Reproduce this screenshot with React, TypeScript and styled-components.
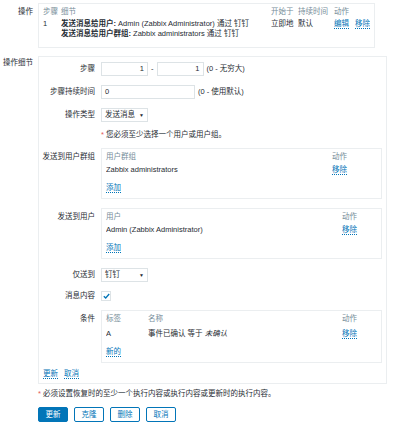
import styled, { createGlobalStyle } from "styled-components";

const GlobalStyle = createGlobalStyle`
  body {
    margin: 0;
    background: #ffffff;
    font-family: "Liberation Sans", Arial, "Noto Sans CJK SC", sans-serif;
    font-size: 7.5px;
    line-height: 10px;
    color: #1f2c33;
  }
`;

/* =======================
   STYLES
======================= */
const Page = styled.div`
  padding: 3px 0 0;
  width: 393px;
`;

const FormRow = styled.div<{ gap?: number }>`
  display: grid;
  grid-template-columns: 33px 1fr;
  column-gap: 5px;
  margin-bottom: ${({ gap }) => gap ?? 0}px;
`;

const RowLabel = styled.div<{ top?: number }>`
  text-align: right;
  padding-top: ${({ top }) => top ?? 0}px;
  white-space: nowrap;
`;

const Box = styled.div<{ right?: number }>`
  border: 1px solid #ebeef0;
  margin-right: ${({ right }) => right ?? 0}px;
`;

const TopBox = styled(Box)`
  padding: 3px 4px 8px;
`;

const Table = styled.table<{ headGap?: number }>`
  width: 100%;
  border-collapse: collapse;
  table-layout: fixed;

  th {
    font-weight: normal;
    color: #768d99;
    text-align: left;
    padding: 0 0 ${({ headGap }) => headGap ?? 2}px;
    height: 10px;
  }

  td {
    padding: 0;
    vertical-align: top;
    white-space: nowrap;
    overflow: hidden;
  }
`;

const Strong = styled.b`
  font-weight: bold;
`;

const Link = styled.a`
  color: #0275b8;
  text-decoration: none;
  border-bottom: 1px dotted #0275b8;
  cursor: pointer;
  & + & {
    margin-left: 6px;
  }
`;

const DetailBox = styled(Box)`
  padding: 5px 4px 4px 0;
`;

const DetailGrid = styled.div`
  display: grid;
  grid-template-columns: 56px 1fr;
  column-gap: 6px;
  row-gap: 9px;
  align-items: start;
`;

const FieldLabel = styled.div<{ top?: number; h?: number }>`
  text-align: right;
  line-height: ${({ h }) => h ?? 14}px;
  padding-top: ${({ top }) => top ?? 0}px;
  white-space: nowrap;
`;

const Field = styled.div<{ h?: number }>`
  display: flex;
  align-items: center;
  gap: 3px;
  min-height: ${({ h }) => h ?? 14}px;
  white-space: nowrap;
`;

const Input = styled.div<{ w: number; align?: string }>`
  box-sizing: border-box;
  width: ${({ w }) => w}px;
  height: 14px;
  line-height: 12px;
  border: 1px solid #dde3e6;
  padding: 0 3px;
  text-align: ${({ align }) => align ?? "left"};
`;

const Select = styled.div`
  box-sizing: border-box;
  width: 47px;
  height: 14px;
  line-height: 12px;
  border: 1px solid #dde3e6;
  padding: 0 3px;
  display: flex;
  justify-content: space-between;
  align-items: center;
`;

const Caret = styled.span`
  font-size: 5px;
  color: #1f2c33;
`;

const Full = styled.div`
  grid-column: 2;
  line-height: 10px;
  margin: -1px 0;
`;

const Req = styled.span`
  color: #e45959;
  margin-right: 2px;
`;

const InnerBox = styled(Box)`
  padding: 3px 4px 5px;
`;

const AddLine = styled.div`
  margin-top: 8px;
`;

const Checkbox = styled.div`
  box-sizing: border-box;
  width: 10px;
  height: 10px;
  border: 1px solid #dde3e6;
  display: flex;
  align-items: center;
  justify-content: center;
`;

const Italic = styled.i`
  font-style: italic;
`;

const FormLinks = styled.div`
  padding: 6px 0 0 4px;
`;

const Note = styled.div`
  margin: 5px 0 8px 38px;
`;

const Buttons = styled.div`
  display: flex;
  gap: 6px;
  padding-left: 38px;
`;

const Button = styled.button<{ primary?: boolean }>`
  box-sizing: border-box;
  width: 30px;
  height: 15px;
  padding: 0;
  font-family: inherit;
  font-size: 7.5px;
  line-height: 13px;
  border: 1px solid #0275b8;
  border-radius: 2px;
  background: ${({ primary }) => (primary ? "#0275b8" : "#ffffff")};
  color: ${({ primary }) => (primary ? "#ffffff" : "#0275b8")};
`;

/* =======================
   COMPONENT
======================= */
const App = () => {
  const ops = [
    { who: "发送消息给用户:", to: "Admin (Zabbix Administrator) 通过 钉钉" },
    { who: "发送消息给用户群组:", to: "Zabbix administrators 通过 钉钉" },
  ];

  return (
    <Page>
      <GlobalStyle />
      <FormRow gap={8}>
        <RowLabel top={4}>操作</RowLabel>
        <TopBox right={18}>
          <Table>
            <colgroup>
              <col style={{ width: 18 }} />
              <col />
              <col style={{ width: 27 }} />
              <col style={{ width: 36 }} />
              <col style={{ width: 36 }} />
            </colgroup>
            <thead>
              <tr>
                <th>步骤</th>
                <th>细节</th>
                <th>开始于</th>
                <th>持续时间</th>
                <th>动作</th>
              </tr>
            </thead>
            <tbody>
              <tr>
                <td>1</td>
                <td>
                  {ops.map((o, i) => (
                    <div key={i}>
                      <Strong>{o.who}</Strong> {o.to}
                    </div>
                  ))}
                </td>
                <td>立即地</td>
                <td>默认</td>
                <td>
                  <Link>编辑</Link>
                  <Link>移除</Link>
                </td>
              </tr>
            </tbody>
          </Table>
        </TopBox>
      </FormRow>

      <FormRow>
        <RowLabel top={2}>操作细节</RowLabel>
        <DetailBox right={6}>
          <DetailGrid>
            <FieldLabel>步骤</FieldLabel>
            <Field>
              <Input w={47} align="right">1</Input>
              <span>-</span>
              <Input w={47} align="right">1</Input>
              <span>(0 - 无穷大)</span>
            </Field>

            <FieldLabel>步骤持续时间</FieldLabel>
            <Field>
              <Input w={94}>0</Input>
              <span>(0 - 使用默认)</span>
            </Field>

            <FieldLabel>操作类型</FieldLabel>
            <Field>
              <Select>
                发送消息<Caret>▼</Caret>
              </Select>
            </Field>

            <Full>
              <Req>*</Req>您必须至少选择一个用户或用户组。
            </Full>

            <FieldLabel top={2}>发送到用户群组</FieldLabel>
            <InnerBox>
              <Table headGap={3}>
                <colgroup>
                  <col />
                  <col style={{ width: 45 }} />
                </colgroup>
                <thead>
                  <tr>
                    <th>用户群组</th>
                    <th>动作</th>
                  </tr>
                </thead>
                <tbody>
                  <tr>
                    <td>Zabbix administrators</td>
                    <td>
                      <Link>移除</Link>
                    </td>
                  </tr>
                </tbody>
              </Table>
              <AddLine>
                <Link>添加</Link>
              </AddLine>
            </InnerBox>

            <FieldLabel top={2}>发送到用户</FieldLabel>
            <InnerBox>
              <Table headGap={3}>
                <colgroup>
                  <col />
                  <col style={{ width: 35 }} />
                </colgroup>
                <thead>
                  <tr>
                    <th>用户</th>
                    <th>动作</th>
                  </tr>
                </thead>
                <tbody>
                  <tr>
                    <td>Admin (Zabbix Administrator)</td>
                    <td>
                      <Link>移除</Link>
                    </td>
                  </tr>
                </tbody>
              </Table>
              <AddLine>
                <Link>添加</Link>
              </AddLine>
            </InnerBox>

            <FieldLabel>仅送到</FieldLabel>
            <Field>
              <Select>
                钉钉<Caret>▼</Caret>
              </Select>
            </Field>

            <FieldLabel h={10}>消息内容</FieldLabel>
            <Field h={10}>
              <Checkbox>
                <svg width="7" height="6" viewBox="0 0 7 6">
                  <path d="M0.8 3.2 L2.7 5 L6.2 1" fill="none" stroke="#0275b8" strokeWidth="1.3" />
                </svg>
              </Checkbox>
            </Field>

            <FieldLabel top={2}>条件</FieldLabel>
            <InnerBox>
              <Table headGap={5}>
                <colgroup>
                  <col style={{ width: 42 }} />
                  <col />
                  <col style={{ width: 35 }} />
                </colgroup>
                <thead>
                  <tr>
                    <th>标签</th>
                    <th>名称</th>
                    <th>动作</th>
                  </tr>
                </thead>
                <tbody>
                  <tr>
                    <td>A</td>
                    <td>
                      事件已确认 等于 <Italic>未确认</Italic>
                    </td>
                    <td>
                      <Link>移除</Link>
                    </td>
                  </tr>
                </tbody>
              </Table>
              <AddLine>
                <Link>新的</Link>
              </AddLine>
            </InnerBox>
          </DetailGrid>
          <FormLinks>
            <Link>更新</Link>
            <Link>取消</Link>
          </FormLinks>
        </DetailBox>
      </FormRow>

      <Note>
        <Req>*</Req>必须设置恢复时的至少一个执行内容或执行内容或更新时的执行内容。
      </Note>

      <Buttons>
        <Button primary>更新</Button>
        <Button>克隆</Button>
        <Button>删除</Button>
        <Button>取消</Button>
      </Buttons>
    </Page>
  );
};

export default App;
